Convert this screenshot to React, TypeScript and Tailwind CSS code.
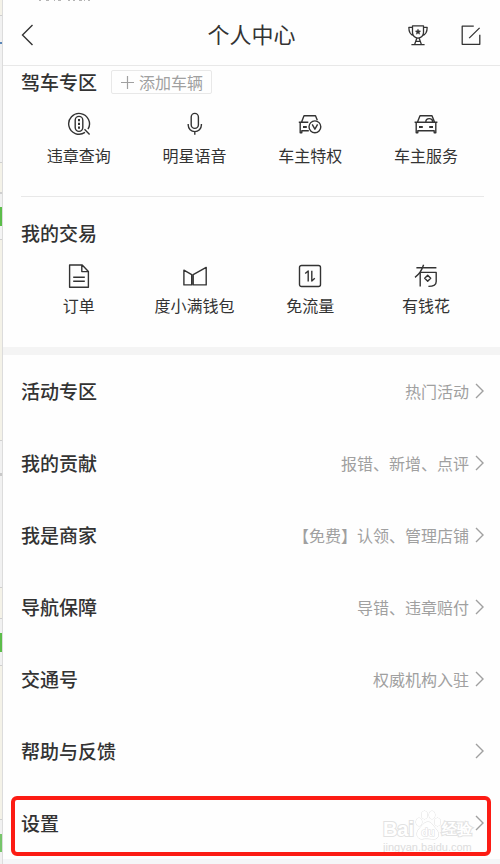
import React from 'react';

function Svg({ children, size = 24, w = 1.4 }: { children: React.ReactNode; size?: number; w?: number }) {
  return (
    <svg width={size} height={size} viewBox="0 0 24 24" fill="none" stroke="currentColor" strokeWidth={w} strokeLinejoin="round" aria-hidden="true">
      {children}
    </svg>
  );
}

const QueryIcon = () => (
  <Svg>
    <path d="M18 20.4A10.4 10.4 0 1 1 21 17.2M17.5 17.2L22.6 22.4" />
    <rect x="8.2" y="4.4" width="7.6" height="15" rx="3.8" />
    <path d="M12 7v2.2M12 10.8v2.2M12 14.6v2.2" strokeWidth="2" />
  </Svg>
);
const MicIcon = () => (
  <Svg>
    <rect x="8.2" y="1.4" width="7.2" height="15" rx="3.6" />
    <path d="M5.2 12v1a6.6 6.6 0 0 0 13.2 0v-1M11.8 19.4v3.4" />
  </Svg>
);
const CarBadgeIcon = () => (
  <Svg>
    <path d="M3.5 10.3L6 3.8h11.5l1.8 4.4M.8 10.3h9.5M2.2 10.3v10.4h1.6v-2h7" />
    <path d="M5 15h3.8" strokeWidth="2" />
    <circle cx="16.9" cy="14.8" r="5.9" />
    <path d="M14.2 12.4l2.7 4.8 2.7-4.8" />
  </Svg>
);
const CarIcon = () => (
  <Svg>
    <path d="M3.4 10.3L6 3.8h12l2.6 6.5M.6 10.3h22.8M2.2 10.3v10.4h1.6v-2h16.4v2h1.6V10.3M11.8 10a3.4 3.4 0 0 1 6.8 0" />
    <path d="M5 15h3.8M15.2 15H19" strokeWidth="2" />
  </Svg>
);
const OrderIcon = () => (
  <Svg>
    <path d="M2.6 1h12.6l6.2 6.4v15.8H2.6zM14.8 1v6.6h6.6M6.2 13.2h11.6M6.2 17.3h11.6" />
  </Svg>
);
const WalletIcon = () => (
  <Svg>
    <path d="M.9 6.2l7.8 4.4v10.3H.9zM10.2 20.9V10.6L23.2 3.4v17.5z" />
  </Svg>
);
const TrafficIcon = () => (
  <Svg>
    <rect x="1.5" y="1.5" width="21" height="21" rx="2" />
    <path d="M7.2 9.6l3-2.7v10.5M13.8 6.8v10.2l3-2.7" />
  </Svg>
);
const FlowerIcon = () => (
  <Svg>
    <path d="M2.4 3.8h20M9.6.8C8 6 5 10.5 1 13.4M6.2 9v13.6M6.2 8.4h16v9q0 5-7.8 5" />
    <path d="M13.7 11.2l3 3-3 3-3-3z" />
  </Svg>
);
const TrophyIcon = () => (
  <Svg size={22}>
    <path d="M6 2h12v7.4a6 6 0 0 1-12 0zM6 3.6H2c0 5 2 8.4 5.4 9M18 3.6h4c0 5-2 8.4-5.4 9M4.8 22.5h14.4M10.7 15.5L8.3 22.4M13.3 15.5l2.4 6.9M9.5 19h5" />
    <path d="M12 5.4l.9 1.9 2.1.3-1.5 1.5.3 2.1-1.8-1-1.8 1 .3-2.1L9 7.6l2.1-.3z" fill="currentColor" strokeWidth=".4" />
  </Svg>
);
const EditIcon = () => (
  <Svg size={22}>
    <path d="M15 2.4H2.4v19.8h19.2V11.8M10 15.4L21.4 4.2" />
  </Svg>
);
function Chevron() {
  return (
    <svg width="9" height="16" viewBox="0 0 9 16" fill="none" stroke="#a0a0a0" strokeWidth="1.4" aria-hidden="true">
      <path d="M1 1l7 7-7 7" />
    </svg>
  );
}

type Item = { label: string; Icon: () => React.JSX.Element };
const driving: Item[] = [
  { label: '违章查询', Icon: QueryIcon },
  { label: '明星语音', Icon: MicIcon },
  { label: '车主特权', Icon: CarBadgeIcon },
  { label: '车主服务', Icon: CarIcon },
];
const trades: Item[] = [
  { label: '订单', Icon: OrderIcon },
  { label: '度小满钱包', Icon: WalletIcon },
  { label: '免流量', Icon: TrafficIcon },
  { label: '有钱花', Icon: FlowerIcon },
];
const rows = [
  { title: '活动专区', note: '热门活动' },
  { title: '我的贡献', note: '报错、新增、点评' },
  { title: '我是商家', note: '【免费】认领、管理店铺' },
  { title: '导航保障', note: '导错、违章赔付' },
  { title: '交通号', note: '权威机构入驻' },
  { title: '帮助与反馈', note: '' },
  { title: '设置', note: '' },
];
const strip = [
  [15, '#f4f2e8'], [1, '#cfcfcf'], [26, '#f1f1f1'], [2, '#5b87b8'], [118, '#f1f1f1'], [1, '#cfcfcf'], [29, '#f4f2e8'],
  [2, '#cfcfcf'], [13, '#f1f1f1'], [19, '#5cbd4a'], [13, '#f4f4f4'], [1, '#cfcfcf'], [200, '#f4f2e8'], [1, '#cfcfcf'],
  [32, '#f1f1f1'], [3, '#c8c8c8'], [111, '#f1f1f1'], [1, '#cfcfcf'], [30, '#f4f2e8'], [1, '#cfcfcf'], [14, '#f1f1f1'],
  [19, '#5cbd4a'], [13, '#f1f1f1'], [1, '#cfcfcf'], [153, '#f4f2e8'], [1, '#cfcfcf'], [14, '#f1f1f1'], [18, '#76c56a'],
  [12, '#f1f1f1'],
] as const;

function Grid({ items, gap }: { items: Item[]; gap: string }) {
  return (
    <div className="grid grid-cols-4">
      {items.map(({ label, Icon }) => (
        <button key={label} type="button" className={`flex flex-col items-center text-base leading-6 whitespace-nowrap ${gap}`}>
          <Icon />
          {label}
        </button>
      ))}
    </div>
  );
}

function Watermark() {
  return (
    <div aria-hidden="true" className="pointer-events-none absolute top-[22px] right-[28px] flex flex-col items-center text-white [-webkit-text-stroke:2px_#e2e2e2] [paint-order:stroke]">
      <div className="flex h-8 items-end gap-px font-[Liberation_Sans,sans-serif] text-xl leading-6 font-bold">
        <span>Bai</span>
        <svg width="26" height="31" viewBox="0 0 26 31" fill="#fff" stroke="#dcdcdc">
          <ellipse cx="4" cy="12" rx="3" ry="4" />
          <ellipse cx="9.5" cy="5" rx="3" ry="4" />
          <ellipse cx="17" cy="5" rx="3" ry="4" />
          <ellipse cx="22.5" cy="12" rx="3" ry="4" />
          <path d="M13 12c4 0 5 4 8 7s4 10-2 10c-3 0-9-1-12 0-6 0-6-7-3-10s5-7 9-7z" />
          <text x="13" y="26" textAnchor="middle" fontSize="11">du</text>
        </svg>
        <span className="text-[15px] leading-6">经验</span>
      </div>
      <span className="font-[Liberation_Sans,sans-serif] text-[11px] leading-3 text-[#dcdcdc] [-webkit-text-stroke:0]">jingyan.baidu.com</span>
    </div>
  );
}

export default function App() {
  return (
    <div className="flex min-h-screen bg-[#f5f6f8] font-[Noto_Sans_CJK_SC,sans-serif] text-[#333]">
      <div aria-hidden="true" className="flex w-[3px] shrink-0 flex-col border-r border-[#dcdcdc]">
        {strip.map(([height, backgroundColor], i) => (
          <div key={i} style={{ height, backgroundColor }} />
        ))}
      </div>
      <div className="min-w-0 flex-1">
        <div className="bg-[#fefefe]">
          <header className="relative grid h-[66px] grid-cols-[1fr_auto_1fr] items-center border-b border-[#e8e8e8] px-[18px] pt-1">
            <svg width="56" height="2" viewBox="0 0 56 2" stroke="#b5b5b5" aria-hidden="true" className="absolute top-0 left-[34px]">
              <path d="M2 .5h2M9 .5h3M17 .5h1M21 .5h3M31 .5h2M36 .5h2M42 .5h3M47 .5h1M51 .5h2" />
            </svg>
            <button type="button" aria-label="返回" className="justify-self-start">
              <svg width="13" height="22" viewBox="0 0 13 22" fill="none" stroke="currentColor" strokeWidth="1.4">
                <path d="M11.5 1L1.5 11l10 10" />
              </svg>
            </button>
            <h1 className="pb-1 text-[22px] leading-8">个人中心</h1>
            <div className="flex gap-[31px] justify-self-end">
              <button type="button" aria-label="成就"><TrophyIcon /></button>
              <button type="button" aria-label="编辑"><EditIcon /></button>
            </div>
          </header>
          <section className="pr-4 pl-[18px]">
            <div className="mb-[18px] flex items-center gap-3.5 pt-1">
              <h2 className="text-[19px] leading-6 font-medium">驾车专区</h2>
              <button type="button" className="flex h-6 items-center gap-1 rounded-xs border border-[#e8e8e8] px-2 text-base leading-5 text-[#a0a0a0]">
                <svg width="15" height="15" viewBox="0 0 15 15" stroke="currentColor" strokeWidth="1.2" aria-hidden="true">
                  <path d="M7.5 1v13M1 7.5h13" />
                </svg>
                添加车辆
              </button>
            </div>
            <Grid items={driving} gap="gap-[7px]" />
            <hr className="mt-[29px] border-[#e8e8e8]" />
          </section>
          <section className="pt-6 pr-4 pb-[30px] pl-[18px]">
            <h2 className="mb-[19px] text-[19px] leading-6 font-medium">我的交易</h2>
            <Grid items={trades} gap="gap-[5px]" />
          </section>
          <div className="h-2 bg-[#f4f4f4]" />
          <nav>
            {rows.map(({ title, note }) => (
              <div key={title} className="relative">
                <a href="#" className="flex h-[72px] items-center justify-between pr-4 pl-[18px]">
                  <span className="text-[19px] font-medium">{title}</span>
                  <span className="flex items-center gap-1.5 text-base text-[#a0a0a0]">
                    {note}
                    <Chevron />
                  </span>
                </a>
                {title === '设置' && (
                  <>
                    <Watermark />
                    <div className="pointer-events-none absolute top-[9px] right-[9px] left-2 h-[60px] rounded-md border-4 border-[#fc1c14]" />
                  </>
                )}
              </div>
            ))}
          </nav>
        </div>
      </div>
    </div>
  );
}
